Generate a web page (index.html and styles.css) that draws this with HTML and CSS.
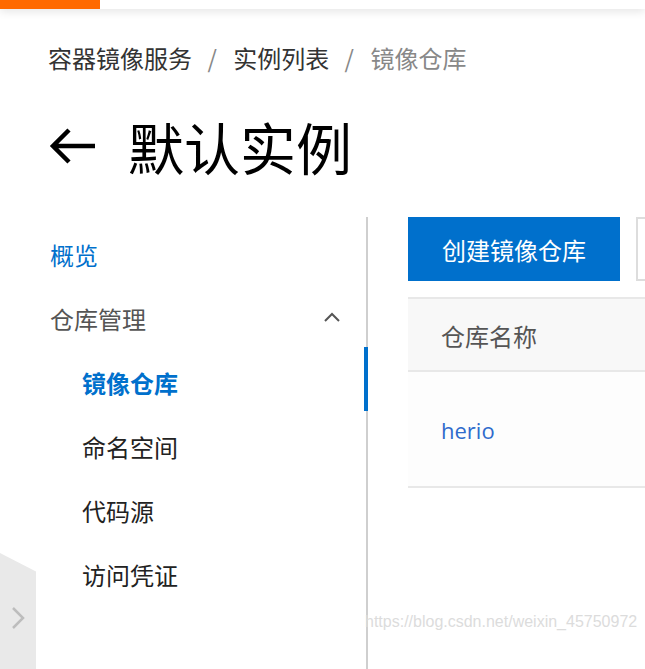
FILE: index.html
```html
<!DOCTYPE html>
<html lang="zh-CN">
<head>
    <meta charset="UTF-8">
    <meta name="viewport" content="width=device-width, initial-scale=1.0">
    <title>镜像仓库 - 默认实例</title>
    <link rel="stylesheet" href="styles.css">
</head>
<body>
<div class="topbar">
    <div class="topbar-accent"></div>
</div>

<div class="breadcrumb">
    <span class="crumb">容器镜像服务</span>
    <span class="sep">/</span>
    <span class="crumb">实例列表</span>
    <span class="sep">/</span>
    <span class="crumb current">镜像仓库</span>
</div>

<div class="page-title">
    <svg class="back" width="48" height="40" viewBox="0 0 48 40">
        <path d="M47 20 H5 M21 4 L5 20 L21 36" fill="none" stroke="#000" stroke-width="4.5"/>
    </svg>
    <h1>默认实例</h1>
</div>

<div class="main">
    <div class="sidebar">
        <div class="nav-item active-top">概览</div>
        <div class="nav-item group">
            <span>仓库管理</span>
            <svg class="caret" width="16" height="10" viewBox="0 0 16 10">
                <path d="M1 9 L8 2 L15 9" fill="none" stroke="#555" stroke-width="2"/>
            </svg>
        </div>
        <div class="nav-item sub selected">镜像仓库</div>
        <div class="nav-item sub">命名空间</div>
        <div class="nav-item sub">代码源</div>
        <div class="nav-item sub">访问凭证</div>
    </div>

    <div class="content">
        <div class="toolbar">
            <button type="button" class="btn-primary">创建镜像仓库</button>
            <div class="search-box"></div>
        </div>
        <div class="table">
            <div class="table-head">仓库名称</div>
            <div class="table-row"><a href="#" class="repo-link">herio</a></div>
        </div>
    </div>
</div>

<div class="collapse-tab">
    <svg width="14" height="24" viewBox="0 0 14 24">
        <path d="M2 2 L12 12 L2 22" fill="none" stroke="#bdbdbd" stroke-width="2.5"/>
    </svg>
</div>

<div class="watermark">https://blog.csdn.net/weixin_45750972</div>
</body>
</html>
```

FILE: styles.css
```css
body {
    margin: 0;
    width: 645px;
    height: 669px;
    overflow: hidden;
    background-color: #fff;
    font-family: "Noto Sans CJK SC", "Noto Sans", sans-serif;
    color: #333;
}

.topbar {
    height: 9px;
    background-color: #fff;
    box-shadow: 0 2px 10px rgba(0, 0, 0, 0.12);
}

.topbar-accent {
    width: 100px;
    height: 9px;
    background-color: #ff6a00;
}

.breadcrumb {
    margin-top: 31px;
    padding-left: 48px;
    font-size: 24px;
    line-height: 36px;
    color: #333;
}

.breadcrumb .sep {
    color: #888;
    margin: 0 11px 0 10px;
}

.breadcrumb .current {
    color: #888;
}

.page-title {
    display: flex;
    align-items: center;
    margin-top: 38px;
    padding-left: 48px;
    height: 64px;
}

.page-title .back {
    margin-right: 32px;
}

h1 {
    margin: 0;
    font-size: 56px;
    line-height: 64px;
    font-weight: normal;
    color: #000;
}

.main {
    display: flex;
    margin-top: 39px;
}

.sidebar {
    width: 368px;
    height: 452px;
    padding-top: 6px;
    box-sizing: border-box;
    border-right: 2px solid #cfcfcf;
    flex-shrink: 0;
}

.nav-item {
    position: relative;
    height: 64px;
    line-height: 64px;
    padding-left: 50px;
    font-size: 24px;
    color: #555;
}

.nav-item.active-top {
    color: #0070cc;
}

.nav-item.group {
    display: flex;
    align-items: center;
    justify-content: space-between;
    padding-right: 26px;
}

.nav-item.group .caret {
    margin-top: -4px;
}

.nav-item.sub {
    padding-left: 82px;
    color: #222;
}

.nav-item.selected {
    color: #0070cc;
    font-weight: bold;
}

.nav-item.selected::after {
    content: "";
    position: absolute;
    right: -2px;
    top: -4px;
    width: 4px;
    height: 64px;
    background-color: #0070cc;
}

.content {
    flex: 1;
    padding-left: 40px;
    min-width: 0;
    overflow: hidden;
}

.toolbar {
    display: flex;
    gap: 16px;
}

.btn-primary {
    width: 212px;
    height: 64px;
    flex-shrink: 0;
    border: none;
    background-color: #0070cc;
    color: #fff;
    font-family: "Noto Sans CJK SC", sans-serif;
    font-size: 24px;
    padding: 0;
    cursor: pointer;
}

.search-box {
    width: 300px;
    height: 64px;
    box-sizing: border-box;
    flex-shrink: 0;
    border: 2px solid #ddd;
}

.table {
    margin-top: 16px;
}

.table-head {
    height: 75px;
    line-height: 73px;
    box-sizing: border-box;
    padding-left: 33px;
    background-color: #f8f8f8;
    border-top: 2px solid #e8e8e8;
    border-bottom: 2px solid #e8e8e8;
    font-size: 24px;
    color: #555;
}

.table-row {
    height: 116px;
    line-height: 116px;
    box-sizing: border-box;
    padding-left: 33px;
    background-color: #fdfdfd;
    border-bottom: 2px solid #e8e8e8;
}

.repo-link {
    font-family: "Open Sans", "Noto Sans", sans-serif;
    font-size: 22px;
    color: #2f6bcc;
    text-decoration: none;
}

.collapse-tab {
    position: absolute;
    left: 0;
    top: 553px;
    width: 36px;
    height: 116px;
    background-color: #e9e9e9;
    clip-path: polygon(0 0, 100% 16%, 100% 100%, 0 100%);
    display: flex;
    align-items: center;
    justify-content: center;
    padding-top: 14px;
    box-sizing: border-box;
}

.watermark {
    position: absolute;
    left: 365px;
    top: 613px;
    font-family: "Liberation Sans", Arial, sans-serif;
    font-size: 16px;
    color: #dcdcdc;
    white-space: nowrap;
}
```
